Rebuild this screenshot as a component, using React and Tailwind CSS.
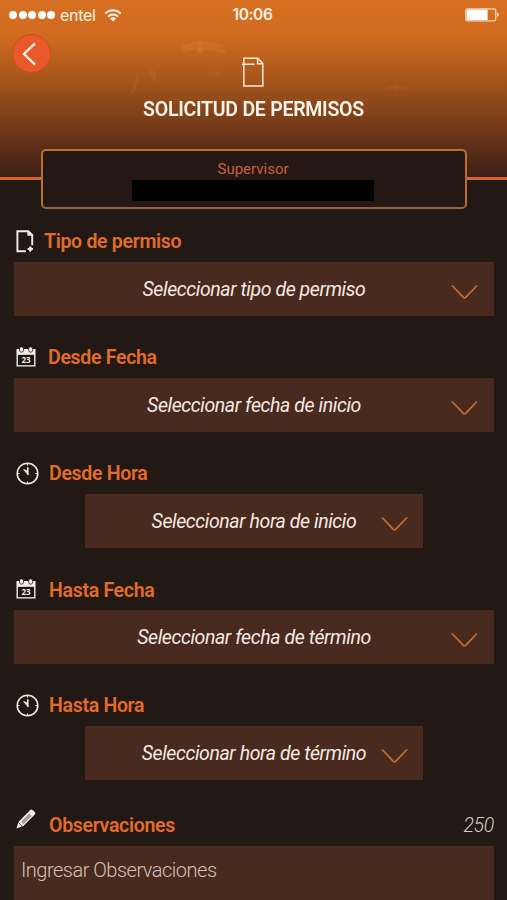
import React, { useState } from 'react';

const WifiIcon = () => (
  <svg className="w-[18px] h-[13px]" viewBox="0 0 18 13" fill="none" stroke="currentColor" strokeWidth="1.9">
    <path d="M1.2 4.6C5.6 0.2 12.4 0.2 16.8 4.6" />
    <path d="M4 7.6C6.8 4.8 11.2 4.8 14 7.6" />
    <path d="M9 12.4L6 9.4C7.7 7.9 10.3 7.9 12 9.4Z" fill="currentColor" stroke="none" />
  </svg>
);

const BatteryIcon = () => (
  <svg className="w-[34px] h-[14px]" viewBox="0 0 34 14">
    <rect x="0.8" y="0.8" width="30" height="12" rx="1.5" fill="none" stroke="#f6d9bd" strokeWidth="1.2" />
    <rect x="1.6" y="1.6" width="21" height="10.4" fill="#fff" />
    <path d="M32 4.6Q33.8 5.2 33.8 6.8T32 9Z" fill="#f6e3d0" />
  </svg>
);

const DocumentIcon = () => (
  <svg className="w-[22px] h-[30px]" viewBox="0 0 22 30" fill="none" stroke="#fbe9d6" strokeWidth="1.5">
    <path d="M1.8 29V1.2H15.8L20.8 6.4V29Z" />
    <path d="M0 7.2H12.6M15.6 1V6.8H20.8" />
  </svg>
);

const NewDocIcon = () => (
  <svg className="w-[18px] h-[23px]" viewBox="0 0 18 23" fill="none" stroke="#f3eeea" strokeWidth="1.9">
    <path d="M9.8 21.2H1.4V1.2H12.3L16.2 5V15.2" />
    <path d="M11.4 1V5.8H16.4Z" fill="#f3eeea" stroke="none" />
    <path d="M14.3 16.4L15.3 18L17 19L15.3 20L14.3 21.6L13.3 20L11.6 19L13.3 18Z" fill="#f3eeea" strokeWidth="1" />
  </svg>
);

const CalendarIcon = () => (
  <svg className="w-5 h-5" viewBox="0 0 20 20">
    <path d="M0.5 2H19.5V19.5H0.5Z" fill="#f3eeea" />
    <path d="M1.9 7.8H18.1V18.2H1.9Z" fill="#1d1613" />
    <rect x="3.5" y="-0.2" width="4" height="5.4" rx="2" fill="#f3eeea" stroke="#231914" strokeWidth="0.8" />
    <rect x="12.7" y="-0.2" width="4" height="5.4" rx="2" fill="#f3eeea" stroke="#231914" strokeWidth="0.8" />
    <text x="10" y="16" textAnchor="middle" fontSize="8" fontWeight="700" fill="#f3eeea" fontFamily="Open Sans, sans-serif">23</text>
  </svg>
);

const ClockIcon = () => (
  <svg className="w-[23px] h-[23px]" viewBox="0 0 23 23" fill="none" stroke="#eee6e0">
    <circle cx="11.5" cy="11.5" r="10.3" strokeWidth="1.6" />
    <path d="M11.5 1.5V3.6M11.5 19.4V21.5M1.5 11.5H3.6M19.4 11.5H21.5" strokeWidth="1.1" />
    <path d="M11.8 12.6V5.2" strokeWidth="1.6" />
    <path d="M7.6 7.6L12.2 12.8L11 8.8Z" fill="#eee6e0" strokeWidth="0.9" />
  </svg>
);

const PencilIcon = () => (
  <svg className="w-5 h-5" viewBox="0 0 20 20">
    <path d="M0.5 19.4L2.2 13.6L6 17.6Z" fill="#f3eeea" />
    <path d="M2.4 13L14 1.3Q15.4 0 16.8 1.2L18.8 3.2Q19.8 4.4 18.6 5.8L6.8 17.4Z" fill="#f3eeea" />
    <path d="M5 12.8L13.3 4.6L15.8 7L7.4 15.2Z" fill="#a79f99" />
  </svg>
);

const ChevronDown = () => (
  <svg className="w-[27px] h-4 shrink-0" viewBox="0 0 27 16" fill="none" stroke="#c86f31" strokeWidth="1.7">
    <path d="M1 1.5L12.4 13.4Q13.5 14.4 14.6 13.4L26 1.5" />
  </svg>
);

// Faint plant silhouette behind the title
const HeaderArt = () => (
  <svg className="absolute inset-0 w-full h-full" viewBox="0 0 507 178" fill="none" stroke="#f0a050">
    <g opacity="0.3" strokeWidth="2" className="blur-[1px]">
      <path d="M181 48L198 42L223 47M183 51L198 47L226 52M199 41V53" />
      <path d="M200 41V53" strokeWidth="4" />
      <path d="M148 71L154 76V82M136 76V82L131 94M153 70V81" opacity="0.6" />
      <path d="M210 74Q215 70 220 75" opacity="0.5" />
      <path d="M385 90L396 87L410 90M396 85V92" opacity="0.6" />
    </g>
  </svg>
);

const fields = [
  { id: 'tipo', label: 'Tipo de permiso', text: 'Seleccionar tipo de permiso', icon: NewDocIcon, labelClass: 'ml-[10px] pt-px' },
  { id: 'desdeFecha', label: 'Desde Fecha', text: 'Seleccionar fecha de inicio', icon: CalendarIcon, labelClass: 'ml-3 pt-px' },
  { id: 'desdeHora', label: 'Desde Hora', text: 'Seleccionar hora de inicio', icon: ClockIcon, labelClass: 'ml-[10px] pt-px', narrow: true },
  { id: 'hastaFecha', label: 'Hasta Fecha', text: 'Seleccionar fecha de término', icon: CalendarIcon, labelClass: 'ml-[13px] pt-[3px]' },
  { id: 'hastaHora', label: 'Hasta Hora', text: 'Seleccionar hora de término', icon: ClockIcon, labelClass: 'ml-[10px] pt-px', narrow: true },
];

const SelectField = ({ field }) => {
  const Icon = field.icon;
  return (
    <div className="pt-5">
      <div className="h-[42px] pl-[2px] flex items-center">
        <Icon />
        <span className={`text-[19.5px] tracking-[-0.3px] font-semibold text-[#e46c2b] ${field.labelClass}`}>{field.label}</span>
      </div>
      <button
        className={`h-[54px] grid grid-cols-[27px_1fr_27px] items-center bg-[#492a1f] ${
          field.narrow ? 'w-[338px] ml-[71px] px-[15px]' : 'w-full px-4'
        }`}
      >
        <span />
        <span className="pt-[2px] text-[19.5px] tracking-[-0.42px] italic text-[#f5e9e1] text-center whitespace-nowrap">
          {field.text}
        </span>
        <span className="pt-[6px]">
          <ChevronDown />
        </span>
      </button>
    </div>
  );
};

export default function App() {
  const [notes, setNotes] = useState('');

  return (
    <div className="w-full h-[900px] overflow-hidden bg-[#231914] font-[Roboto,sans-serif]">
      <header className="relative h-[180px] border-b-[3px] border-[#d0682f] bg-[linear-gradient(180deg,#d87022_0%,#d06b20_20%,#ad591b_42%,#86441a_62%,#5b2d17_84%,#3e2018_100%)]">
        <HeaderArt />
        <div className="relative h-[30px] pl-[9px] pr-[8px] grid grid-cols-[1fr_auto_1fr] items-center text-[#fff1e4]">
          <div className="flex items-center">
            <div className="flex gap-[1.5px] mr-[5px]">
              {[0, 1, 2, 3, 4].map((dot) => (
                <span key={dot} className="w-[8px] h-[8px] rounded-full bg-white" />
              ))}
            </div>
            <span className="text-[16px] mr-[8px] font-[Inter,sans-serif] tracking-[-0.3px]">entel</span>
            <WifiIcon />
          </div>
          <span className="text-[15.5px] mr-[3px] tracking-[-0.4px] font-semibold font-[Inter,sans-serif]">10:06</span>
          <div className="flex justify-end">
            <BatteryIcon />
          </div>
        </div>
        <div className="relative grid grid-cols-[1fr_auto_1fr] px-3">
          <button className="mt-1 w-[39px] h-[39px] rounded-full bg-[#e8582b] border border-[#c9501f] flex items-center justify-center">
            <svg className="w-[14px] h-6 mr-[6px]" viewBox="0 0 14 24" fill="none" stroke="#fff0e0" strokeWidth="2.4">
              <path d="M13 1.3L2 12L13 22.7" />
            </svg>
          </button>
          <div className="pt-[27px] flex flex-col items-center">
            <DocumentIcon />
            <h1 className="mt-[9px] text-[19.5px] tracking-[-0.26px] leading-7 font-semibold text-[#fff5ec]">SOLICITUD DE PERMISOS</h1>
          </div>
        </div>
      </header>

      <section className="relative w-[426px] h-[60px] -mt-[31px] ml-[41px] pr-[2px] rounded-[5px] border-2 border-[#b87030] border-b-[#96633a] bg-[#251713] flex flex-col items-center">
        <span className="mt-[7px] text-[15px] leading-[22px] text-[#c5623a]">Supervisor</span>
        <div className="w-[242px] h-[21px] bg-black" />
      </section>

      <main className="pl-[14px] pr-[13px] -mt-[9px]">
        {fields.map((field) => (
          <SelectField key={field.id} field={field} />
        ))}

        <div className="pt-6">
          <div className="h-[42px] pl-[2px] flex items-center">
            <span className="-mt-3">
              <PencilIcon />
            </span>
            <span className="ml-[13px] pt-px text-[19.5px] tracking-[-0.3px] font-semibold text-[#e46c2b]">Observaciones</span>
            <span className="ml-auto pt-[2px] text-[19.5px] tracking-[-0.3px] italic font-light text-[#d5ccc6]">{250 - notes.length}</span>
          </div>
          <textarea
            value={notes}
            onChange={(e) => setNotes(e.target.value)}
            placeholder="Ingresar Observaciones"
            className="block w-full h-[90px] px-[7px] py-[10px] resize-none outline-none bg-[#492a1f] text-[20px] tracking-[-0.5px] leading-7 font-light text-[#d3c1b8] placeholder:text-[#d3c1b8]"
          />
        </div>
      </main>
    </div>
  );
}
